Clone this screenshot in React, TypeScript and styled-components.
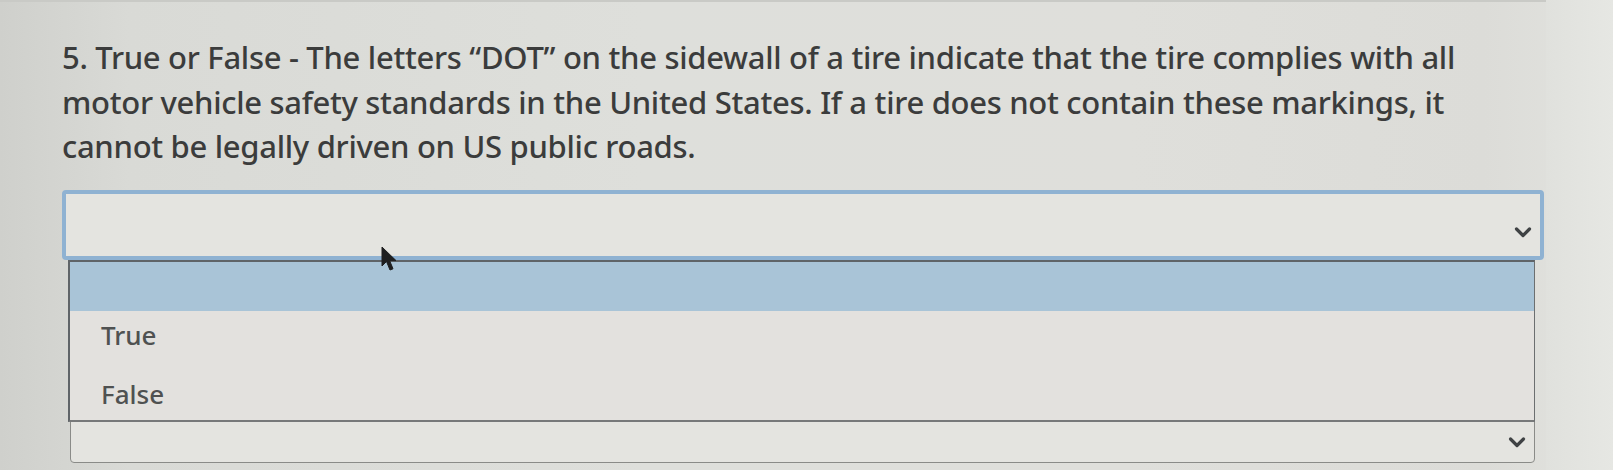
import React from "react";
import styled, { createGlobalStyle } from "styled-components";

const Global = createGlobalStyle`
  html, body { margin: 0; padding: 0; }
  body {
    width: 1613px;
    height: 470px;
    overflow: hidden;
    background: linear-gradient(90deg, #cfd0cc 0%, #d9dad6 8%, #dedfdb 40%, #dfdfdb 70%, #dcdcd8 92%, #e2e3df 100%);
    font-family: "Noto Sans", "Open Sans", sans-serif;
  }
`;

const Page = styled.div`
  display: flex;
  width: 1613px;
  height: 470px;
`;

const Panel = styled.div`
  position: relative;
  width: 1546px;
  height: 470px;
  border-top: 2px solid #c9cac6;
  box-sizing: border-box;
  padding: 33px 0 0 62px;
`;

const Question = styled.p`
  margin: 0;
  width: 1420px;
  font-size: 31px;
  font-weight: 500;
  line-height: 44.5px;
  color: #3b3c3c;
  letter-spacing: -0.3px;
`;

const SelectBox = styled.div<{ $focused?: boolean; $top: number; $height: number; $left: number; $width: number }>`
  position: relative;
  display: flex;
  align-items: center;
  justify-content: flex-end;
  box-sizing: border-box;
  margin-top: ${(p) => p.$top}px;
  margin-left: ${(p) => p.$left}px;
  width: ${(p) => p.$width}px;
  height: ${(p) => p.$height}px;
  padding-right: 8px;
  background: #e4e4e0;
  border: ${(p) => (p.$focused ? "4px solid #8fb2d2" : "1.5px solid #8a8b88")};
  border-radius: 4px;
`;

const Chevron = styled.svg`
  width: 18px;
  height: 13px;
  margin-top: 16px;
`;

const Menu = styled.div`
  position: absolute;
  left: 68px;
  top: 258px;
  width: 1467px;
  box-sizing: border-box;
  background: #e3e1de;
  border-top: 2px solid #5f6468;
  border-left: 2px solid #5f6468;
  border-right: 1.5px solid #6c6f70;
  border-bottom: 2px solid #77797a;
  display: flex;
  flex-direction: column;
  z-index: 2;
`;

const Option = styled.div<{ $highlight?: boolean; $h: number; $pt?: number }>`
  height: ${(p) => p.$h}px;
  box-sizing: border-box;
  padding-top: ${(p) => p.$pt ?? 0}px;
  display: flex;
  align-items: center;
  padding-left: 31px;
  font-size: 26px;
  font-weight: 500;
  color: #4f5151;
  background: ${(p) => (p.$highlight ? "#a9c4d7" : "transparent")};
`;

const Cursor = styled.svg`
  position: absolute;
  left: 381px;
  top: 244px;
  width: 18px;
  height: 26px;
  z-index: 3;
`;

const RightStrip = styled.div`
  flex: 1;
  background: linear-gradient(90deg, #e0e1dd, #e6e7e3);
`;

const ChevronIcon = () => (
  <Chevron viewBox="0 0 18 13">
    <path d="M2.5 3 L9 9.5 L15.5 3" fill="none" stroke="#3f4244" strokeWidth="3.2" strokeLinecap="round" strokeLinejoin="round" />
  </Chevron>
);

export default function App() {
  return (
    <>
      <Global />
      <Page>
        <Panel>
          <Question>
            5. True or False - The letters “DOT” on the sidewall of a tire indicate that the tire complies with all motor vehicle safety standards in the United States. If a tire does not contain these markings, it cannot be legally driven on US public roads.
          </Question>
          <SelectBox $focused $top={21} $height={70} $left={0} $width={1482}>
            <ChevronIcon />
          </SelectBox>
          <SelectBox $top={146} $height={57} $left={8} $width={1465}>
            <ChevronIcon />
          </SelectBox>
          <Menu>
            <Option $highlight $h={49} />
            <Option $h={48}>True</Option>
            <Option $h={61} $pt={8}>False</Option>
          </Menu>
          <Cursor viewBox="0 0 18 26">
            <path d="M1 1 L1 20 L5.5 15.5 L9 24 L12 22.8 L8.6 14.6 L15 14.6 Z" fill="#1e1f20" stroke="#1e1f20" strokeWidth="1" strokeLinejoin="round" />
          </Cursor>
        </Panel>
        <RightStrip />
      </Page>
    </>
  );
}
